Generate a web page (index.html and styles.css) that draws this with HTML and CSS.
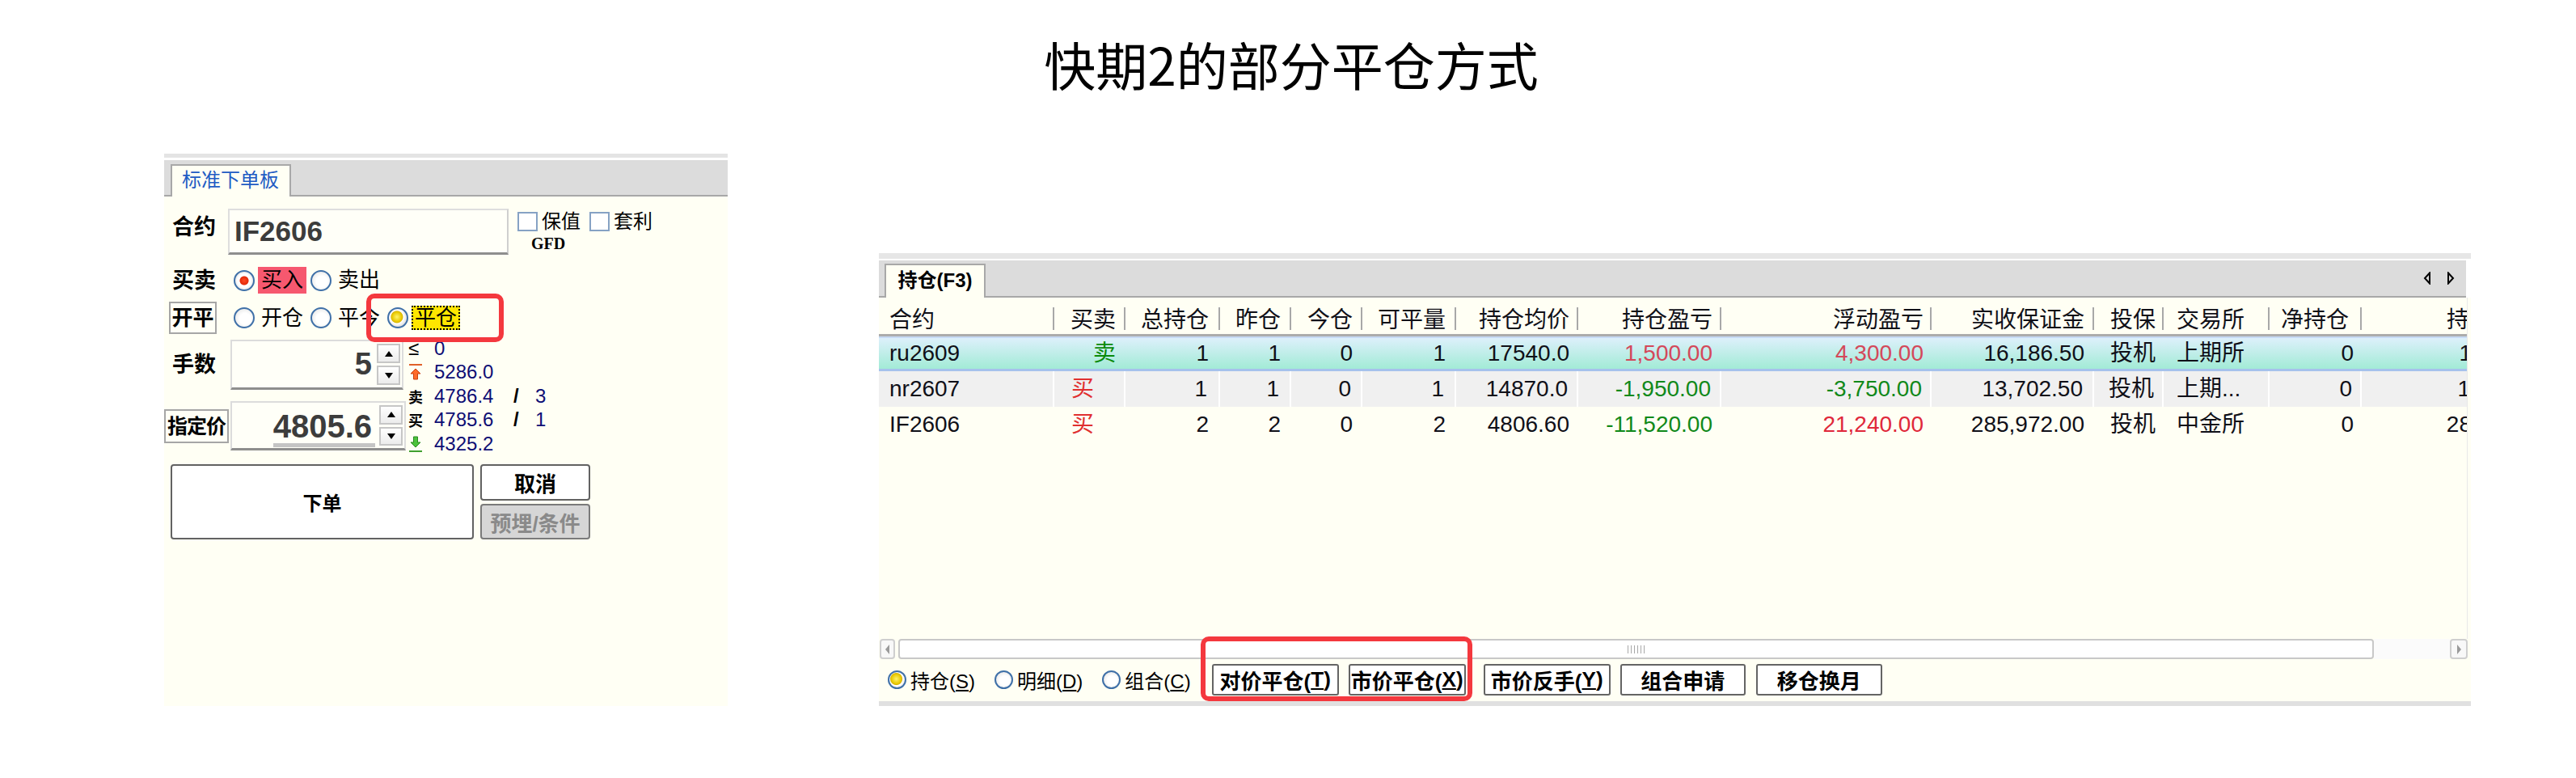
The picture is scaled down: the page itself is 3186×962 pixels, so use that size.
FILE: index.html
```html
<!DOCTYPE html>
<html lang="zh-CN">
<head>
  <meta charset="UTF-8" />
  <title>快期2的部分平仓方式</title>
  <link rel="stylesheet" href="styles.css">
</head>
<body>
  <h1 class="title">快期2的部分平仓方式</h1>

  <div class="stage">
    <!-- 标准下单板 -->
    <section class="order-panel">
      <div class="strip">
        <div class="tab tab-blue">标准下单板</div>
      </div>
      <div class="order-body">
        <div class="row row-contract">
          <span class="lbl lbl-contract">合约</span>
          <div class="contract-input">IF2606</div>
          <div class="opts">
            <div class="checks">
              <span class="cbox"></span><span class="ctext">保值</span>
              <span class="cbox"></span><span class="ctext">套利</span>
            </div>
            <div class="gfd">GFD</div>
          </div>
        </div>

        <div class="row row-side">
          <span class="lbl">买卖</span>
          <span class="opt"><span class="radio on-red"></span><span class="rtext hl-red">买入</span></span>
          <span class="opt"><span class="radio"></span><span class="rtext">卖出</span></span>
        </div>

        <div class="row row-offset">
          <span class="btn-small">开平</span>
          <span class="opt"><span class="radio"></span><span class="rtext">开仓</span></span>
          <span class="opt"><span class="radio"></span><span class="rtext">平今</span></span>
          <span class="opt"><span class="radio on-yellow"></span><span class="rtext hl-yellow">平仓</span></span>
        </div>

        <div class="qp">
          <div class="qp-left">
            <div class="field">
              <span class="lbl">手数</span>
              <div class="spin spin-qty">
                <span class="spin-val">5</span>
                <span class="spin-btns"><i class="up"></i><i class="down"></i></span>
              </div>
            </div>
            <div class="field field-price">
              <span class="btn-small btn-price">指定价</span>
              <div class="spin spin-price">
                <span class="spin-val"><span class="sel">4805.6</span></span>
                <span class="spin-btns"><i class="up"></i><i class="down"></i></span>
              </div>
            </div>
          </div>
          <div class="quote">
            <div class="q"><span class="qi le">≤</span><span class="qn">0</span></div>
            <div class="q">
              <span class="qi">
                <svg width="18" height="22" viewBox="0 0 18 22"><path d="M1 2H17" stroke="#e0602a" stroke-width="2"/><path d="M9 7L15 13H11.5V20H6.5V13H3Z" fill="#ff6a2a" stroke="#c84010" stroke-width="1"/></svg>
              </span>
              <span class="qn">5286.0</span>
            </div>
            <div class="q"><span class="qi qch">卖</span><span class="qn">4786.4</span><span class="qs">/</span><span class="qc">3</span></div>
            <div class="q"><span class="qi qch">买</span><span class="qn">4785.6</span><span class="qs">/</span><span class="qc">1</span></div>
            <div class="q">
              <span class="qi">
                <svg width="18" height="22" viewBox="0 0 18 22"><path d="M6.5 2H11.5V9H15L9 15L3 9H6.5Z" fill="#4cc23c" stroke="#2a8a20" stroke-width="1"/><path d="M1 20H17" stroke="#40a030" stroke-width="2"/></svg>
              </span>
              <span class="qn">4325.2</span>
            </div>
          </div>
        </div>

        <div class="actions">
          <div class="btn btn-order">下单</div>
          <div class="btn-col">
            <div class="btn btn-cancel">取消</div>
            <div class="btn btn-cond">预埋/条件</div>
          </div>
        </div>
      </div>
      <div class="mark mark-left"></div>
    </section>

    <!-- 持仓 -->
    <section class="pos-panel">
      <div class="pos-strip">
        <div class="tab tab-pos">持仓(F3)</div>
        <div class="strip-nav">
          <svg width="10" height="16" viewBox="0 0 10 16"><path d="M8 1.5L2 8L8 14.5Z" fill="none" stroke="#000" stroke-width="2"/></svg>
          <svg width="10" height="16" viewBox="0 0 10 16"><path d="M2 1.5L8 8L2 14.5Z" fill="none" stroke="#000" stroke-width="2"/></svg>
        </div>
      </div>
      <div class="pos-body">
        <div class="grid-wrap">
          <table class="grid">
            <colgroup>
              <col class="c1"><col class="c2"><col class="c3"><col class="c4"><col class="c5"><col class="c6"><col class="c7">
              <col class="c8"><col class="c9"><col class="c10"><col class="c11"><col class="c12"><col class="c13"><col class="c14">
            </colgroup>
            <thead>
              <tr>
                <th>合约</th><th>买卖</th><th>总持仓</th><th>昨仓</th><th>今仓</th><th>可平量</th><th>持仓均价</th>
                <th>持仓盈亏</th><th>浮动盈亏</th><th>实收保证金</th><th>投保</th><th>交易所</th><th>净持仓</th><th>持仓保证金</th>
              </tr>
            </thead>
            <tbody>
              <tr class="r1">
                <td>ru2609</td><td class="sell">卖</td><td>1</td><td>1</td><td>0</td><td>1</td><td>17540.0</td>
                <td class="pink">1,500.00</td><td class="pink">4,300.00</td><td>16,186.50</td><td>投机</td><td>上期所</td><td>0</td><td>16,186.50</td>
              </tr>
              <tr class="r2">
                <td>nr2607</td><td class="buy">买</td><td>1</td><td>1</td><td>0</td><td>1</td><td>14870.0</td>
                <td class="green">-1,950.00</td><td class="green">-3,750.00</td><td>13,702.50</td><td>投机</td><td>上期...</td><td>0</td><td>13,702.50</td>
              </tr>
              <tr class="r3">
                <td>IF2606</td><td class="buy">买</td><td>2</td><td>2</td><td>0</td><td>2</td><td>4806.60</td>
                <td class="green">-11,520.00</td><td class="red">21,240.00</td><td>285,972.00</td><td>投机</td><td>中金所</td><td>0</td><td>285,972.00</td>
              </tr>
            </tbody>
          </table>
        </div>

        <div class="hscroll">
          <span class="sb-btn sb-left"></span>
          <span class="sb-thumb"><span class="grip"></span></span>
          <span class="sb-track"></span>
          <span class="sb-btn sb-right"></span>
        </div>

        <div class="foot">
          <span class="fopt"><span class="radio fr on-yellow"></span><span class="ftext">持仓(<u>S</u>)</span></span>
          <span class="fopt"><span class="radio fr"></span><span class="ftext">明细(<u>D</u>)</span></span>
          <span class="fopt"><span class="radio fr"></span><span class="ftext">组合(<u>C</u>)</span></span>
          <span class="fbtn fb1">对价平仓(<u>T</u>)</span>
          <span class="fbtn fb2">市价平仓(<u>X</u>)</span>
          <span class="fbtn fb3">市价反手(<u>Y</u>)</span>
          <span class="fbtn fb4">组合申请</span>
          <span class="fbtn fb5">移仓换月</span>
        </div>
        <div class="pos-bottom"></div>
      </div>
      <div class="mark mark-right"></div>
    </section>
  </div>
</body>
</html>
```

FILE: styles.css
```css
* {
  box-sizing: border-box;
}
body {
  margin: 0;
  width: 3186px;
  background: #fff;
  color: #000;
  font-family: "Liberation Sans", "Noto Sans CJK SC", sans-serif;
}
.title {
  margin: 0;
  padding: 40px 0 0 8px;
  height: 116px;
  line-height: 76px;
  font-family: "Noto Sans CJK SC", sans-serif;
  font-size: 64px;
  font-weight: normal;
  text-align: center;
}
.stage {
  display: flex;
  align-items: flex-start;
  padding-left: 203px;
  margin-top: 74px;
}

/* ---------- order panel ---------- */
.order-panel {
  position: relative;
  width: 697px;
  border-top: 5px solid #e4e4e4;
}
.strip {
  margin-top: 3px;
  height: 45px;
  background: #dcdcdc;
  border-bottom: 2px solid #a8a8a8;
  display: flex;
  align-items: flex-end;
  padding-left: 8px;
}
.tab {
  height: 40px;
  margin-bottom: -2px;
  background: #fffff4;
  border: 2px solid #a8a8a8;
  border-bottom: none;
}
.tab-blue {
  width: 149px;
  padding-left: 12px;
  color: #1f5cc4;
  font-size: 24px;
  line-height: 36px;
}
.order-body {
  background: #fffff4;
  height: 630px;
  padding-top: 15px;
}
.row {
  display: flex;
  align-items: center;
}
.lbl {
  font-weight: bold;
  font-size: 27px;
  line-height: 34px;
}
.row-contract {
  align-items: flex-start;
  height: 57px;
}
.lbl-contract {
  width: 69px;
  margin: 6px 0 0 10px;
}
.contract-input {
  width: 347px;
  height: 57px;
  border: 2px solid #dedede;
  border-right-color: #cfcfcf;
  border-bottom: 3px solid #8e8e8e;
  background: #fffff8;
  padding-left: 6px;
  font-size: 35px;
  font-weight: bold;
  color: #3c3c3c;
  line-height: 52px;
}
.opts {
  margin-left: 11px;
  padding-top: 3px;
}
.checks {
  display: flex;
  align-items: center;
  height: 25px;
}
.cbox {
  width: 25px;
  height: 24px;
  border: 2px solid #86a2c4;
  background: #fff;
}
.ctext {
  font-size: 24px;
  line-height: 25px;
  margin: 0 11px 0 5px;
}
.gfd {
  margin: 7px 0 0 17px;
  font-family: "Liberation Serif", serif;
  font-weight: bold;
  font-size: 20px;
  line-height: 16px;
}
.row-side {
  margin-top: 15px;
  height: 33px;
  padding-left: 10px;
}
.row-side .lbl {
  width: 76px;
}
.opt {
  display: flex;
  align-items: center;
  height: 100%;
}
.opt + .opt {
  margin-left: 5px;
}
.radio {
  flex: none;
  width: 26px;
  height: 26px;
  border-radius: 50%;
  border: 2px solid #3f70a8;
  background: radial-gradient(circle at 55% 55%, #fff 0, #fff 40%, #dcdcdc 100%);
}
.radio.on-red {
  background: radial-gradient(circle, #ff4a24 0, #e42a08 5px, #fff 6px, #fff 8px, #dcdcdc 13px);
}
.radio.on-yellow {
  background: radial-gradient(circle at 45% 45%, #fff36a 0, #e8c800 6px, #d8b400 7px, #fff 8px, #dcdcdc 13px);
}
.rtext {
  font-size: 26px;
  line-height: 33px;
  padding: 0 4px;
  margin-left: 4px;
}
.hl-red {
  background: #f6586f;
}
.hl-yellow {
  background: #ffe600;
  line-height: 30px;
  outline: 2px dotted #000;
  outline-offset: -2px;
}
.row-offset {
  margin-top: 10px;
  height: 40px;
  padding-left: 6px;
}
.btn-small {
  flex: none;
  border: 2px solid #a6a6a6;
  background: #fffff6;
  font-weight: bold;
  font-size: 26px;
  height: 40px;
  line-height: 36px;
  text-align: center;
}
.row-offset .btn-small {
  width: 59px;
  margin-right: 21px;
}
.qp {
  display: flex;
  margin-top: 7px;
  height: 137px;
}
.qp-left {
  width: 302px;
}
.field {
  display: flex;
  align-items: center;
}
.field .lbl {
  width: 72px;
  margin-left: 10px;
}
.spin {
  display: flex;
  border: 2px solid #dcdcdc;
  border-bottom: 3px solid #8e8e8e;
  background: #fffff8;
}
.spin-val {
  flex: 1;
  text-align: right;
  font-weight: bold;
  color: #3c3c3c;
}
.spin-qty {
  width: 214px;
  height: 62px;
}
.spin-qty .spin-val {
  font-size: 38px;
  line-height: 56px;
  padding-right: 6px;
}
.spin-btns {
  width: 29px;
  margin: 3px 2px 3px 0;
  display: flex;
  flex-direction: column;
  gap: 3px;
}
.spin-btns i {
  flex: 1;
  border: 2px solid #c6c6c6;
  background: linear-gradient(#fff, #ececec);
  display: flex;
  align-items: center;
  justify-content: center;
}
.spin-btns i::before {
  content: "";
  border-left: 5px solid transparent;
  border-right: 5px solid transparent;
  border-bottom: 7px solid #000;
}
.spin-btns i.down::before {
  border-bottom: none;
  border-top: 7px solid #000;
}
.field-price {
  margin-top: 14px;
}
.btn-price {
  width: 80px;
  height: 42px;
  margin-right: 2px;
  font-size: 25px;
  line-height: 38px;
  letter-spacing: -1px;
  white-space: nowrap;
  overflow: hidden;
}
.spin-price {
  width: 217px;
  height: 61px;
}
.spin-price .spin-val {
  font-size: 40px;
  padding: 7px 5px 0 0;
}
.sel {
  display: inline-block;
  line-height: 42px;
  padding-right: 4px;
  border-bottom: 5px solid #c4c4c4;
}
.quote {
  margin-top: -4px;
  font-size: 24px;
}
.q {
  display: flex;
  align-items: center;
  height: 29.5px;
}
.qi {
  width: 32px;
  display: flex;
  align-items: center;
}
.le {
  font-size: 24px;
}
.qch {
  font-family: "Noto Sans CJK SC", sans-serif;
  font-weight: bold;
  font-size: 18px;
}
.qn {
  width: 98px;
  color: #0e0e74;
}
.qs {
  width: 27px;
  font-weight: bold;
}
.qc {
  color: #0e0e74;
}
.actions {
  display: flex;
  margin: 17px 0 0 8px;
}
.btn {
  border: 2px solid #626262;
  border-radius: 4px;
  background: #fff;
  font-weight: bold;
  display: flex;
  align-items: center;
  justify-content: center;
}
.btn-order {
  width: 375px;
  height: 93px;
  font-size: 24px;
}
.btn-col {
  margin-left: 8px;
  width: 136px;
  display: flex;
  flex-direction: column;
  gap: 4px;
}
.btn-cancel {
  height: 45px;
  font-size: 26px;
}
.btn-cond {
  height: 44px;
  font-size: 26px;
  background: #d6d6d6;
  color: #8a8a8a;
  border-color: #7a7a7a;
}
.mark {
  position: absolute;
  border: 6px solid #f4383e;
  border-radius: 10px;
}
.mark-left {
  left: 250px;
  top: 168px;
  width: 170px;
  height: 60px;
}

/* ---------- position panel ---------- */
.pos-panel {
  position: relative;
  width: 1969px;
  margin: 123px 0 0 187px;
  border-top: 7px solid #e6e6e6;
}
.pos-strip {
  margin: 2px 6px 0 0;
  height: 46px;
  background: #dcdcdc;
  border-bottom: 2px solid #a8a8a8;
  display: flex;
  align-items: flex-end;
  padding-left: 7px;
}
.tab-pos {
  width: 125px;
  height: 42px;
  text-align: center;
  font-weight: bold;
  font-size: 24px;
  line-height: 38px;
}
.strip-nav {
  margin-left: auto;
  align-self: center;
  display: flex;
  gap: 19px;
  padding-right: 14px;
}
.strip-nav svg {
  display: block;
}
.pos-body {
  background: #fffff4;
}
.grid-wrap {
  width: 1965px;
  height: 422px;
  overflow: hidden;
  border-right: 1px solid #e8e8e8;
}
.grid {
  border-collapse: separate;
  border-spacing: 0;
  table-layout: fixed;
  width: 2089px;
  font-size: 28px;
}
.c1 { width: 217px; }
.c2 { width: 88px; }
.c3 { width: 117px; }
.c4 { width: 88px; }
.c5 { width: 88px; }
.c6 { width: 116px; }
.c7 { width: 151px; }
.c8 { width: 177px; }
.c9 { width: 260px; }
.c10 { width: 201px; }
.c11 { width: 86px; }
.c12 { width: 131px; }
.c13 { width: 114px; }
.c14 { width: 255px; }
.grid th,
.grid td {
  white-space: nowrap;
  overflow: hidden;
  text-align: right;
  padding: 0 12px 0 0;
  color: #101018;
}
.grid th {
  font-weight: normal;
  padding-top: 10px;
  line-height: 35px;
  border-bottom: 3px solid #acacac;
  background: linear-gradient(#a8a8a8, #a8a8a8) no-repeat right 0 top 12px / 2px 28px;
}
.grid td {
  line-height: 44px;
}
.grid th:nth-child(1),
.grid td:nth-child(1) { text-align: left; padding-left: 13px; }
.grid th:nth-child(3), .grid td:nth-child(3) { padding-right: 14px; }
.grid th:nth-child(4), .grid td:nth-child(4) { padding-right: 13px; }
.grid th:nth-child(6), .grid td:nth-child(6) { padding-right: 13px; }
.grid th:nth-child(7), .grid td:nth-child(7) { padding-right: 11px; }
.grid th:nth-child(8), .grid td:nth-child(8) { padding-right: 11px; }
.grid th:nth-child(9), .grid td:nth-child(9) { padding-right: 10px; }
.grid th:nth-child(11), .grid td:nth-child(11) { padding-right: 10px; }
.grid th:nth-child(12),
.grid td:nth-child(12) { text-align: left; padding-left: 16px; }
.grid th:nth-child(13) { padding-right: 16px; }
.grid td:nth-child(13) { padding-right: 10px; }
.grid th:nth-child(14), .grid td:nth-child(14) { padding-right: 10px; }
.grid td.buy {
  text-align: left;
  padding-left: 21px;
  color: #e03030;
}
.grid td.sell {
  color: #0a8a0a;
}
.grid td.pink { color: #d4485a; }
.grid td.red { color: #e0283a; }
.grid td.green { color: #11891a; }
.r1 td {
  line-height: 38px;
  background: linear-gradient(#ddf0fb, #a2ebd6);
  border-top: 2px solid #c6daf4;
  border-bottom: 3px solid #a6c2ec;
}
.r2 td {
  background: #f0f0f0;
  border-right: 2px solid #fff;
}
.hscroll {
  display: flex;
  width: 1965px;
  height: 25px;
  padding-left: 1px;
}
.sb-btn {
  width: 19px;
  border: 2px solid #cfcfcf;
  border-radius: 4px;
  background: #f8f8f8;
  display: flex;
  align-items: center;
  justify-content: center;
}
.sb-btn::before {
  content: "";
  border-top: 6px solid transparent;
  border-bottom: 6px solid transparent;
}
.sb-left::before {
  border-right: 5px solid #9a9a9a;
}
.sb-right {
  width: 22px;
}
.sb-right::before {
  border-left: 5px solid #9a9a9a;
}
.sb-thumb {
  width: 1825px;
  margin-left: 4px;
  border: 2px solid #c8c8c8;
  border-radius: 4px;
  background: #fff;
  display: flex;
  align-items: center;
  justify-content: center;
}
.grip {
  width: 22px;
  height: 10px;
  background: repeating-linear-gradient(90deg, #a8a8a8 0 1px, transparent 1px 4px);
}
.sb-track {
  flex: 1;
  background: #fbfbfb;
}
.foot {
  display: flex;
  align-items: center;
  height: 40px;
  margin-top: 5px;
  padding-left: 11px;
  font-size: 24px;
}
.fopt {
  display: flex;
  align-items: center;
}
.fopt + .fopt {
  margin-left: 24px;
}
.radio.fr {
  width: 23px;
  height: 23px;
}
.ftext {
  margin-left: 5px;
}
.fbtn {
  height: 39px;
  border: 2px solid #646464;
  border-radius: 3px;
  background: #fff;
  font-weight: bold;
  font-size: 26px;
  display: flex;
  align-items: center;
  justify-content: center;
  white-space: nowrap;
}
.fb1 { width: 157px; margin-left: 26px; }
.fb2 { width: 145px; margin-left: 12px; }
.fb3 { width: 157px; margin-left: 22px; }
.fb4 { width: 155px; margin-left: 12px; }
.fb5 { width: 156px; margin-left: 13px; }
.pos-bottom {
  height: 6px;
  margin-top: 7px;
  background: #e0e0e0;
}
.mark-right {
  left: 398px;
  top: 467px;
  width: 336px;
  height: 80px;
}
```
